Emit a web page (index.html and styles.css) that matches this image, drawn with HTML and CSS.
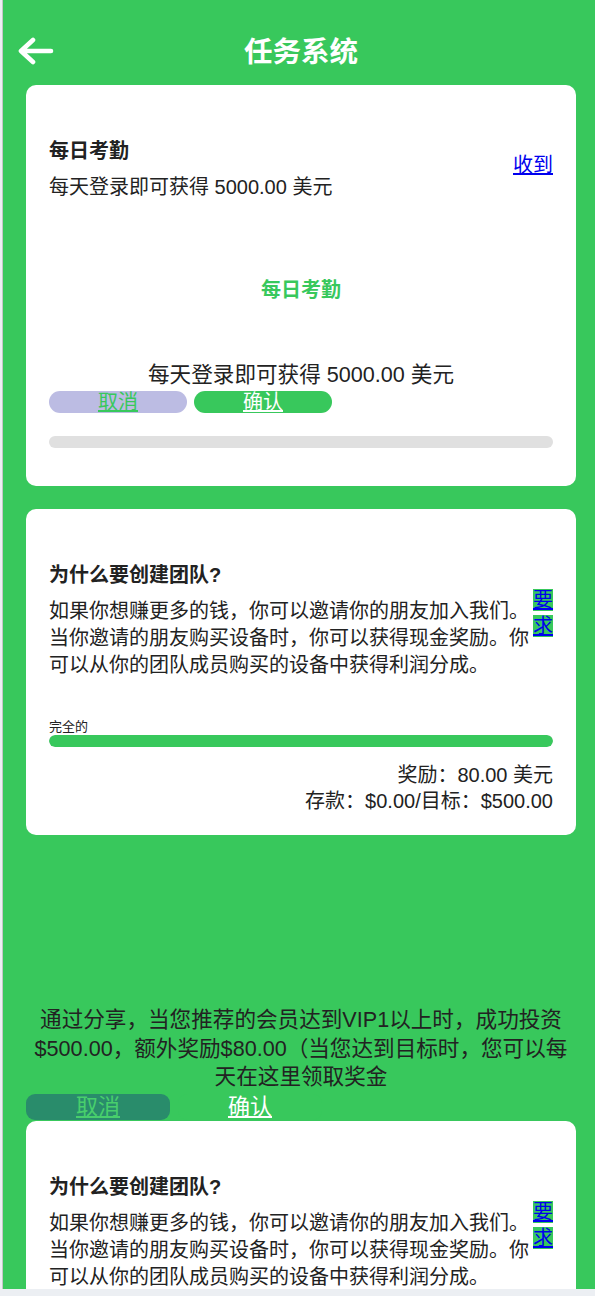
FILE: index.html
```html
<!DOCTYPE html>
<html lang="zh-CN">
<head>
<meta charset="utf-8">
<title>任务系统</title>
<link rel="stylesheet" href="styles.css">
</head>
<body>
<div class="page">
  <header class="topbar">
    <a class="back" href="#" aria-label="返回">
      <svg width="36" height="28" viewBox="0 0 36 28" fill="none" stroke="#fff" stroke-width="4.6" stroke-linecap="round" stroke-linejoin="round"><path d="M3 14H33M15 3L3 14L15 25"/></svg>
    </a>
    <h1 class="title">任务系统</h1>
    <span class="spacer"></span>
  </header>

  <section class="card card-daily">
    <div class="task-row">
      <div class="task-info">
        <h2 class="task-name">每日考勤</h2>
        <p class="task-desc">每天登录即可获得 5000.00 美元</p>
      </div>
      <a class="task-link" href="#">收到</a>
    </div>
    <div class="dialog">
      <h3 class="dialog-title">每日考勤</h3>
      <p class="dialog-msg">每天登录即可获得 5000.00 美元</p>
      <div class="actions">
        <a class="btn btn-cancel" href="#">取消</a>
        <a class="btn btn-ok" href="#">确认</a>
      </div>
    </div>
    <div class="bar"><div class="bar-fill" style="width:0%"></div></div>
  </section>

  <section class="card card-team">
    <div class="task-row">
      <div class="task-info">
        <h2 class="task-name">为什么要创建团队?</h2>
        <p class="task-desc">如果你想赚更多的钱，你可以邀请你的朋友加入我们。当你邀请的朋友购买设备时，你可以获得现金奖励。你可以从你的团队成员购买的设备中获得利润分成。</p>
      </div>
      <div class="req-wrap"><a class="req" href="#">要求</a></div>
    </div>
    <div class="bar-label">完全的</div>
    <div class="bar"><div class="bar-fill" style="width:100%"></div></div>
    <div class="rewards">
      <div>奖励：80.00 美元</div>
      <div>存款：$0.00/目标：$500.00</div>
    </div>
  </section>

  <div class="notice">
    <p class="notice-msg">通过分享，当您推荐的会员达到VIP1以上时，成功投资$500.00，额外奖励$80.00（当您达到目标时，您可以每天在这里领取奖金</p>
    <div class="actions actions-lg">
      <a class="btn btn-cancel-dark" href="#">取消</a>
      <a class="btn btn-ok-plain" href="#">确认</a>
    </div>
  </div>

  <section class="card card-team card-last">
    <div class="task-row">
      <div class="task-info">
        <h2 class="task-name">为什么要创建团队?</h2>
        <p class="task-desc">如果你想赚更多的钱，你可以邀请你的朋友加入我们。当你邀请的朋友购买设备时，你可以获得现金奖励。你可以从你的团队成员购买的设备中获得利润分成。</p>
      </div>
      <div class="req-wrap"><a class="req" href="#">要求</a></div>
    </div>
    <div class="bar-label">完全的</div>
    <div class="bar"><div class="bar-fill" style="width:100%"></div></div>
    <div class="rewards">
      <div>奖励：80.00 美元</div>
      <div>存款：$0.00/目标：$500.00</div>
    </div>
  </section>
</div>
</body>
</html>
```
FILE: styles.css
```css
html, body {
  margin: 0;
  padding: 0;
}

body {
  padding-left: 2px;
  background: #eceff3;
  font-family: "Liberation Sans", "Noto Sans CJK SC", sans-serif;
  color: #222;
}

.page {
  width: 592px;
  height: 1289px;
  overflow: hidden;
  background: #38c85c;
  border-left: 1px solid #c4c6c8;
}

/* header */
.topbar {
  display: grid;
  grid-template-columns: 1fr auto 1fr;
  align-items: start;
  padding: 34px 11px 15px 15px;
}

.back {
  display: block;
  width: 36px;
  height: 28px;
  margin-top: 3px;
  justify-self: start;
}

.back svg {
  display: block;
}

.title {
  margin: 0;
  font-size: 28.5px;
  line-height: 36px;
  font-weight: 700;
  color: #fff;
}

/* cards */
.card {
  background: #fff;
  border-radius: 10px;
  margin: 0 19px 0 23px;
  padding: 52px 23px 21px;
}

.card-daily {
  padding-bottom: 38px;
}

.card-team {
  margin-top: 23px;
}

.card-last {
  margin-top: 1px;
}

.task-row {
  display: flex;
  align-items: center;
}

.task-info {
  flex: 1;
  min-width: 0;
}

.task-name {
  margin: 0 0 9px;
  font-size: 20px;
  line-height: 28px;
  font-weight: 700;
  color: #222;
}

.task-desc {
  margin: 0;
  font-size: 20px;
  line-height: 27px;
  color: #222;
}

.task-link {
  flex: none;
  color: #0000ee;
  font-size: 20px;
  line-height: 26px;
  text-decoration: underline;
  margin-bottom: 8px;
}

.req-wrap {
  flex: none;
  width: 20px;
  font-size: 20px;
  line-height: 26px;
  margin-bottom: 14px;
}

.req {
  background: #38c85c;
  color: #0000ee;
  text-decoration: underline;
}

/* dialog inside card */
.dialog {
  margin-top: 75px;
  text-align: center;
}

.dialog-title {
  margin: 0;
  font-size: 20px;
  line-height: 28px;
  font-weight: 700;
  color: #38c85c;
}

.dialog-msg {
  margin: 56px 0 0;
  font-size: 21.6px;
  line-height: 29px;
  color: #222;
}

.actions {
  display: flex;
  gap: 7px;
  margin-top: 2px;
}

.btn {
  display: flex;
  align-items: center;
  justify-content: center;
  width: 138px;
  height: 22px;
  border-radius: 11px;
  font-size: 20px;
  line-height: 22px;
  text-decoration: underline;
}

.btn-cancel {
  background: #bcbce3;
  color: #38c85c;
}

.btn-ok {
  background: #38c85c;
  color: #fff;
}

/* progress */
.bar {
  height: 12px;
  border-radius: 6px;
  background: #e0e0e0;
  overflow: hidden;
}

.dialog + .bar {
  margin-top: 23px;
}

.bar-fill {
  height: 100%;
  border-radius: 6px;
  background: #38c85c;
}

.bar-label {
  margin-top: 40px;
  font-size: 13px;
  line-height: 16px;
  color: #222;
}

.rewards {
  margin-top: 15px;
  text-align: right;
  font-size: 20px;
  line-height: 26px;
  color: #222;
}

/* notice on green */
.notice {
  margin: 171px 19px 0 23px;
  text-align: center;
}

.notice-msg {
  margin: 0;
  font-size: 21.6px;
  line-height: 28.5px;
  color: #222;
}

.actions-lg {
  gap: 8px;
  margin-top: 2px;
}

.actions-lg .btn {
  width: 144px;
  height: 26px;
  border-radius: 9px;
  font-size: 22px;
  line-height: 26px;
}

.btn-cancel-dark {
  background: #298c6b;
  color: #48cf6c;
}

.btn-ok-plain {
  background: #38c85c;
  color: #fff;
}
```
